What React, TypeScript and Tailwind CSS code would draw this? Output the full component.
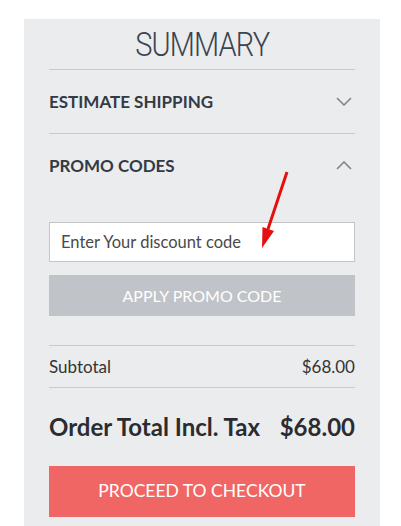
const font = { fontFamily: '"Source Sans Pro", Lato, "Open Sans", sans-serif' };

function Chevron({ up }: { up?: boolean }) {
  return (
    <svg width="16" height="9" viewBox="0 0 16 9" className="mr-[3px]" fill="none">
      <polyline
        points={up ? '1,8 8,1 15,8' : '1,1 8,8 15,1'}
        stroke="#7d8085"
        strokeWidth="1.5"
      />
    </svg>
  );
}

function Section({ title, open }: { title: string; open?: boolean }) {
  return (
    <div className="flex items-center justify-between h-[63px]">
      <span className="text-[17px] font-bold uppercase text-[#333a44]">{title}</span>
      <Chevron up={open} />
    </div>
  );
}

export default function App() {
  return (
    <div className="bg-white min-h-[526px] pt-[19px] pl-[24px]" style={font}>
      <div className="w-[356px] h-[507px] bg-[#ebecee] px-[25px] overflow-hidden">
        <h2 className="text-center leading-none pt-[9px] pb-[8px] border-b border-[#c9cacc]">
          <span className="inline-block scale-x-[0.88] text-[33px] font-light tracking-[-0.03em] text-[#3b4450] font-['Roboto',sans-serif]">
            SUMMARY
          </span>
        </h2>
        <div className="border-b border-[#c9cacc]">
          <Section title="Estimate Shipping" />
        </div>
        <Section title="Promo Codes" open />
        <div className="relative pt-[25px]">
          <input
            type="text"
            placeholder="Enter Your discount code"
            className="w-full h-[40px] bg-white border border-[#c4c5c7] px-[11px] text-[16.5px] text-[#444] placeholder:text-[#4a4a4a] outline-none"
          />
          <button className="mt-[13px] w-full h-[41px] bg-[#c0c4c8] text-white text-[16px] uppercase">
            Apply Promo Code
          </button>
          <svg className="absolute left-[200px] top-[-30px]" width="50" height="90" viewBox="0 0 50 90">
            <line x1="38" y1="5" x2="19" y2="62" stroke="#e41010" strokeWidth="3" />
            <polygon points="13,81 25,64 13.5,60" fill="#e41010" />
          </svg>
        </div>
        <div className="mt-[29px] border-t border-b border-[#c9cacc] h-[43px] flex items-center justify-between text-[17px] text-[#333]">
          <span>Subtotal</span>
          <span>$68.00</span>
        </div>
        <div className="h-[78px] flex items-center justify-between text-[24px] font-bold text-[#2c2c30]">
          <span>Order Total Incl. Tax</span>
          <span>$68.00</span>
        </div>
        <button className="w-full h-[51px] bg-[#f06664] text-white text-[17.5px] uppercase">
          Proceed to Checkout
        </button>
      </div>
    </div>
  );
}
